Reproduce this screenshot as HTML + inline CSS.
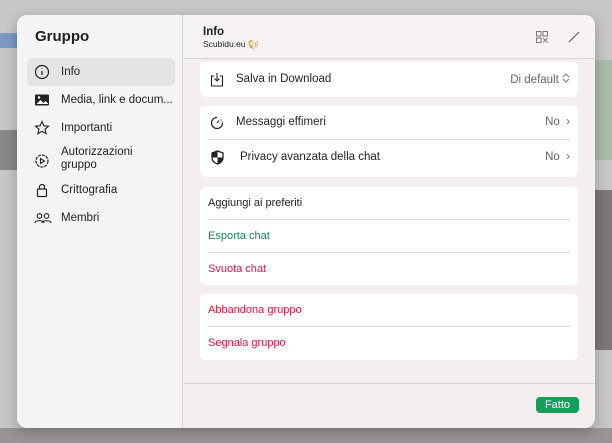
<!DOCTYPE html>
<html><head><meta charset="utf-8"><style>
*{margin:0;padding:0;box-sizing:border-box}
body{width:612px;height:443px;overflow:hidden;background:#c9c6c6;font-family:"Liberation Sans",sans-serif;position:relative}
.blk{position:absolute}
#dlg{position:absolute;left:17px;top:15px;width:578px;height:413px;border-radius:10px;overflow:hidden;background:#f5eeee;box-shadow:0 4px 14px rgba(0,0,0,.25)}
#side{position:absolute;left:0;top:0;width:166px;height:413px;background:#f5f3f3;border-right:1px solid #dcd8d8}
#side h1{position:absolute;left:18px;top:13px;font-size:15px;font-weight:bold;color:#222}
.si{position:absolute;left:10px;width:148px;height:28px;font-size:11.5px;color:#222}
.si span{position:absolute;left:34px;top:8px}
.si svg{position:absolute;left:7px;top:6px}
#main{position:absolute;left:167px;top:0;right:0;bottom:0}
#hdr{position:absolute;left:0;top:0;right:0;height:44px;border-bottom:1px solid #d8d2d2;background:rgba(248,244,244,.8)}
.card{position:absolute;left:16px;width:378px;background:#fff;border-radius:5px}
.row{position:absolute;left:0;right:0;height:33px;font-size:11.5px;color:#222}
.row .t{position:absolute;left:36px;top:10px}
.row .v{position:absolute;right:8px;top:10px;color:#666}
.div{position:absolute;left:8px;right:8px;height:1px;background:#dcdcdc}
.lt{position:absolute;left:8px;font-size:11px}
</style></head><body>
<div class="blk" style="left:0;top:33px;width:17px;height:15px;background:#7b9bc6"></div>
<div class="blk" style="left:0;top:130px;width:17px;height:40px;background:#8a8888"></div>
<div class="blk" style="left:595px;top:60px;width:17px;height:100px;background:#a9bca9"></div>
<div class="blk" style="left:595px;top:190px;width:17px;height:160px;background:#7d7777"></div>
<div class="blk" style="left:0;top:428px;width:612px;height:15px;background:#9a9595"></div>
<div id="dlg">
 <div id="side">
  <h1>Gruppo</h1>
  <div class="si" style="top:43px;background:#e6e3e3;border-radius:5px"><svg width="16" height="16" viewBox="0 0 16 16"><circle cx="8" cy="8" r="6.5" fill="none" stroke="#222" stroke-width="1.2"/><path d="M8 7v4M8 4.6v.4" stroke="#222" stroke-width="1.3"/></svg><span>Info</span></div>
  <div class="si" style="top:71px"><svg width="16" height="16" viewBox="0 0 16 16"><rect x="1" y="2.5" width="14" height="11" rx="1" fill="#222"/><path d="M2.5 12l4-4 3 3 2-2 3 3z" fill="#fff"/><circle cx="5" cy="5.5" r="1.2" fill="#fff"/></svg><span>Media, link e docum...</span></div>
  <div class="si" style="top:99px"><svg width="16" height="16" viewBox="0 0 16 16"><path d="M8 1.5l1.9 4.3 4.6.4-3.5 3 1.1 4.5L8 11.3l-4.1 2.4 1.1-4.5-3.5-3 4.6-.4z" fill="none" stroke="#222" stroke-width="1.1"/></svg><span>Importanti</span></div>
  <div class="si" style="top:129px;height:34px"><svg width="16" height="16" viewBox="0 0 16 16" style="top:9px"><circle cx="8" cy="8" r="6" fill="none" stroke="#222" stroke-width="1.2" stroke-dasharray="3 1"/><path d="M6.5 5.5v5l4-2.5z" fill="none" stroke="#222" stroke-width="1.1"/></svg><span style="top:2px;line-height:13px">Autorizzazioni<br>gruppo</span></div>
  <div class="si" style="top:161px"><svg width="16" height="16" viewBox="0 0 16 16"><rect x="3.5" y="7" width="9" height="7.5" rx="1" fill="none" stroke="#222" stroke-width="1.2"/><path d="M5.5 7V5a2.5 2.5 0 015 0v2" fill="none" stroke="#222" stroke-width="1.2"/></svg><span>Crittografia</span></div>
  <div class="si" style="top:189px"><svg width="18" height="16" viewBox="0 0 18 16"><circle cx="5.5" cy="6" r="2.3" fill="none" stroke="#222" stroke-width="1.1"/><circle cx="12.5" cy="6" r="2.3" fill="none" stroke="#222" stroke-width="1.1"/><path d="M1 13c0-3 9-3 9 0M8 13c0-3 9-3 9 0" fill="none" stroke="#222" stroke-width="1.1"/></svg><span>Membri</span></div>
 </div>
 <div id="main">
  <div id="hdr">
   <div style="position:absolute;left:19px;top:11px;font-size:11.5px;font-weight:bold;color:#222">Info</div>
   <div style="position:absolute;left:19px;top:24px;font-size:8.5px;color:#222">Scubidu.eu <span style="color:#c8872c">🐿</span></div>
   <svg style="position:absolute;left:352px;top:16px" width="12" height="12" viewBox="0 0 12 12"><g fill="none" stroke="#777" stroke-width="1"><rect x=".5" y=".5" width="4.5" height="4.5"/><rect x="7" y=".5" width="4.5" height="4.5"/><rect x=".5" y="7" width="4.5" height="4.5"/><path d="M7 7l4.5 4.5M11.5 7L7 11.5"/></g></svg>
   <svg style="position:absolute;left:384px;top:16px" width="12" height="12"><path d="M1 11L11 1" stroke="#555" stroke-width="1.1"/></svg>
  </div>
  <div class="card" style="top:47px;height:35px"><div class="row" style="top:1px"><svg style="position:absolute;left:10px;top:9px" width="14" height="15" viewBox="0 0 14 15"><path d="M4 4H1.5v10h11V4H10M7 1v8M4.5 6.5L7 9l2.5-2.5" fill="none" stroke="#222" stroke-width="1.1"/></svg><span class="t">Salva in Download</span><span class="v">Di default <svg width="8" height="10" viewBox="0 0 8 10"><path d="M1 4l3-3 3 3M1 6l3 3 3-3" fill="none" stroke="#777" stroke-width="1"/></svg></span></div></div>
  <div class="card" style="top:91px;height:71px">
   <div class="row" style="top:0"><svg style="position:absolute;left:10px;top:10px" width="14" height="14" viewBox="0 0 14 14"><path d="M7 1.5A5.5 5.5 0 1 0 12.5 7" fill="none" stroke="#222" stroke-width="1.2"/><path d="M7 7l2-2.5" stroke="#222" stroke-width="1.1"/><circle cx="11" cy="4" r=".6" fill="#222"/><circle cx="12.3" cy="6" r=".6" fill="#222"/></svg><span class="t">Messaggi effimeri</span><span class="v">No &nbsp;›</span></div>
   <div class="div" style="top:33px"></div>
   <div class="row" style="top:35px"><svg style="position:absolute;left:11px;top:9px" width="13" height="15" viewBox="0 0 13 15"><path d="M6.5 1L1 3v4.5c0 3.5 2.5 5.5 5.5 6.5 3-1 5.5-3 5.5-6.5V3z" fill="#fff" stroke="#222" stroke-width="1.3"/><path d="M6.5 1v6.5H1V3zM6.5 7.5H12c0 3.5-2.5 5.5-5.5 6.5z" fill="#222"/></svg><span class="t" style="left:40px">Privacy avanzata della chat</span><span class="v">No &nbsp;›</span></div>
  </div>
  <div class="card" style="top:172px;height:98px">
   <span class="lt" style="top:10px;color:#222">Aggiungi ai preferiti</span>
   <div class="div" style="top:32px"></div>
   <span class="lt" style="top:43px;color:#138a55">Esporta chat</span>
   <div class="div" style="top:65px"></div>
   <span class="lt" style="top:76px;color:#e0163c">Svuota chat</span>
  </div>
  <div class="card" style="top:279px;height:66px">
   <span class="lt" style="top:10px;color:#e0163c">Abbandona gruppo</span>
   <div class="div" style="top:32px"></div>
   <span class="lt" style="top:43px;color:#e0163c">Segnala gruppo</span>
  </div>
  <div style="position:absolute;left:0;right:0;top:368px;height:1px;background:#d8d2d2"></div>
  <div style="position:absolute;left:352px;top:382px;width:43px;height:16px;background:#14a05b;border-radius:4px;color:#fff;font-size:11px;text-align:center;line-height:16px">Fatto</div>
 </div>
</div>
</body></html>
